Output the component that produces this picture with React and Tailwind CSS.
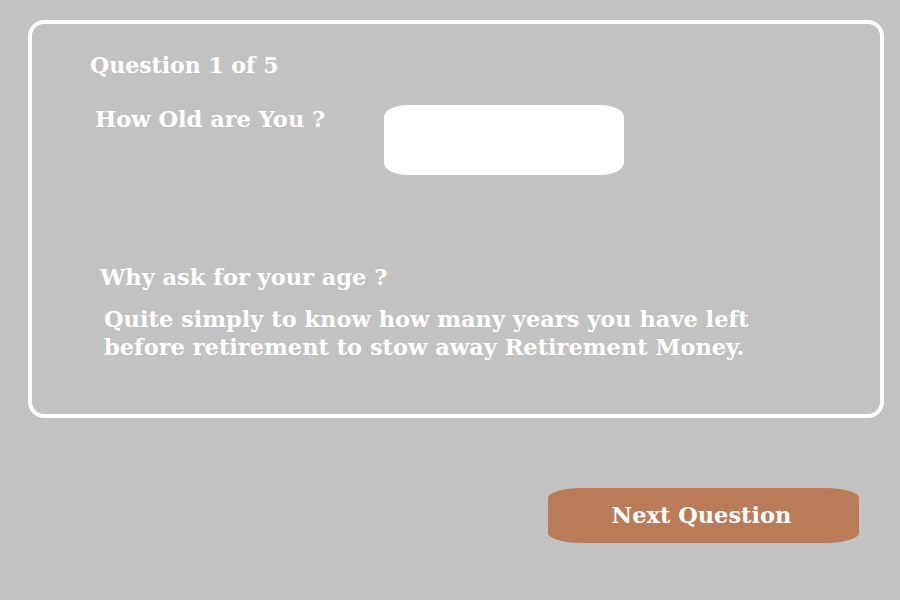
import React from "react";

const font = { fontFamily: '"DejaVu Serif", "Liberation Serif", serif' };

export default function App() {
  return (
    <div
      className="w-[900px] h-[600px] bg-[#c2c2c2] pt-[20px] pl-[28px] text-white font-bold"
      style={font}
    >
      <div className="w-[856px] h-[398px] border-4 border-white rounded-[16px] relative">
        <div className="pl-[58px] pt-[28px] text-[22px] leading-[26px]">Question 1 of 5</div>
        <div className="flex mt-[28px]">
          <div className="pl-[63px] text-[22.5px] leading-[26px] w-[352px]">How Old are You ?</div>
          <input
            type="text"
            className="mt-[-1px] w-[240px] h-[70px] bg-white rounded-[24px/12px] outline-none"
          />
        </div>
        <div className="pl-[68px] mt-[89px] text-[22.5px] leading-[26px]">Why ask for your age ?</div>
        <p className="pl-[72px] mt-[15px] text-[22.5px] leading-[28px]">
          Quite simply to know how many years you have left
          <br />
          before retirement to stow away Retirement Money.
        </p>
      </div>
      <div className="flex justify-end pr-[41px] mt-[70px]">
        <button className="w-[311px] h-[55px] bg-[#b97b58] rounded-[34px/10px] text-white text-[22.5px] font-bold pr-[4px]">
          Next Question
        </button>
      </div>
    </div>
  );
}
